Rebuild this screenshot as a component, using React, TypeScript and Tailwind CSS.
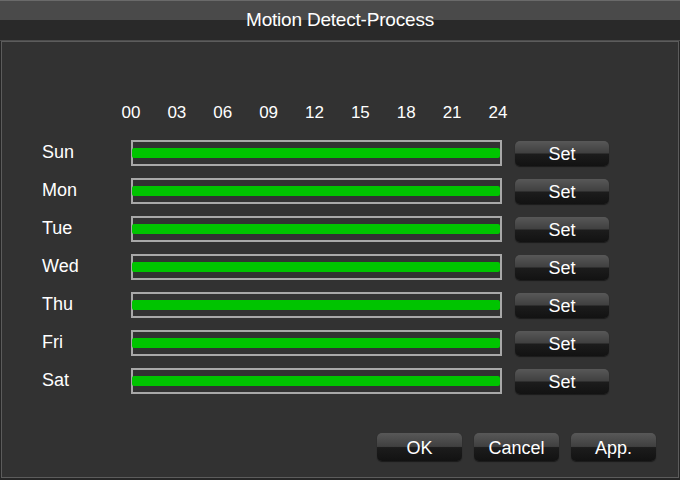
import React from "react";

const days = ["Sun", "Mon", "Tue", "Wed", "Thu", "Fri", "Sat"];
const hours = ["00", "03", "06", "09", "12", "15", "18", "21", "24"];

function DvrButton({ text, class_name }: { text: string; class_name: string }) {
  return (
    <button
      className={`relative flex items-center justify-center overflow-hidden rounded-[5px] bg-[linear-gradient(to_bottom,#585858_0%,#404040_48%,#1c1c1c_52%,#121212_100%)] text-[18px] leading-none text-white shadow-[0_1px_1px_#1a1a1a] ${class_name}`}
    >
      <span className="relative top-[1px]">{text}</span>
    </button>
  );
}

function App() {
  return (
    <div
      className="h-[480px] w-[680px] bg-[#262626] text-white"
      style={{ fontFamily: '"Liberation Sans", Arial, sans-serif' }}
    >
      <div className="h-[41px] border-t border-t-[#6a6a6a] bg-[linear-gradient(to_bottom,#4a4a4a_0%,#4a4a4a_50%,#292929_50%,#292929_100%)] border-b border-b-[#4c4c4c] flex items-center justify-center">
        <span className="text-[19px] tracking-[-0.2px]">Motion Detect-Process</span>
      </div>
      <div className="ml-px mr-px h-[437px] border border-[#5c5c5c] bg-[#323232]">
        <div className="mt-[61px] ml-[118px] flex w-[389px] justify-between text-[17px] leading-[20px]">
          {hours.map((h) => (
            <span key={h} className="w-[22px] text-center">
              {h}
            </span>
          ))}
        </div>
        <div className="mt-[17px] flex flex-col gap-[12px]">
          {days.map((d) => (
            <div key={d} className="flex items-center">
              <span className="ml-[40px] w-[89px] text-[18px] leading-none -mt-[2px]">{d}</span>
              <div className="relative h-[26px] w-[371px] border-2 border-[#a8a8a8]">
                <div className="absolute left-[-1px] right-0 top-[6px] h-[10px] rounded-[2px] bg-[#00c400]" />
              </div>
              <DvrButton text="Set" class_name="ml-[13px] h-[25px] w-[94px]" />
            </div>
          ))}
        </div>
        <div className="mt-[39px] flex justify-end gap-[12px] pr-[22px]">
          <DvrButton text="OK" class_name="h-[28px] w-[85px]" />
          <DvrButton text="Cancel" class_name="h-[28px] w-[85px]" />
          <DvrButton text="App." class_name="h-[28px] w-[85px]" />
        </div>
      </div>
    </div>
  );
}

export default App;
